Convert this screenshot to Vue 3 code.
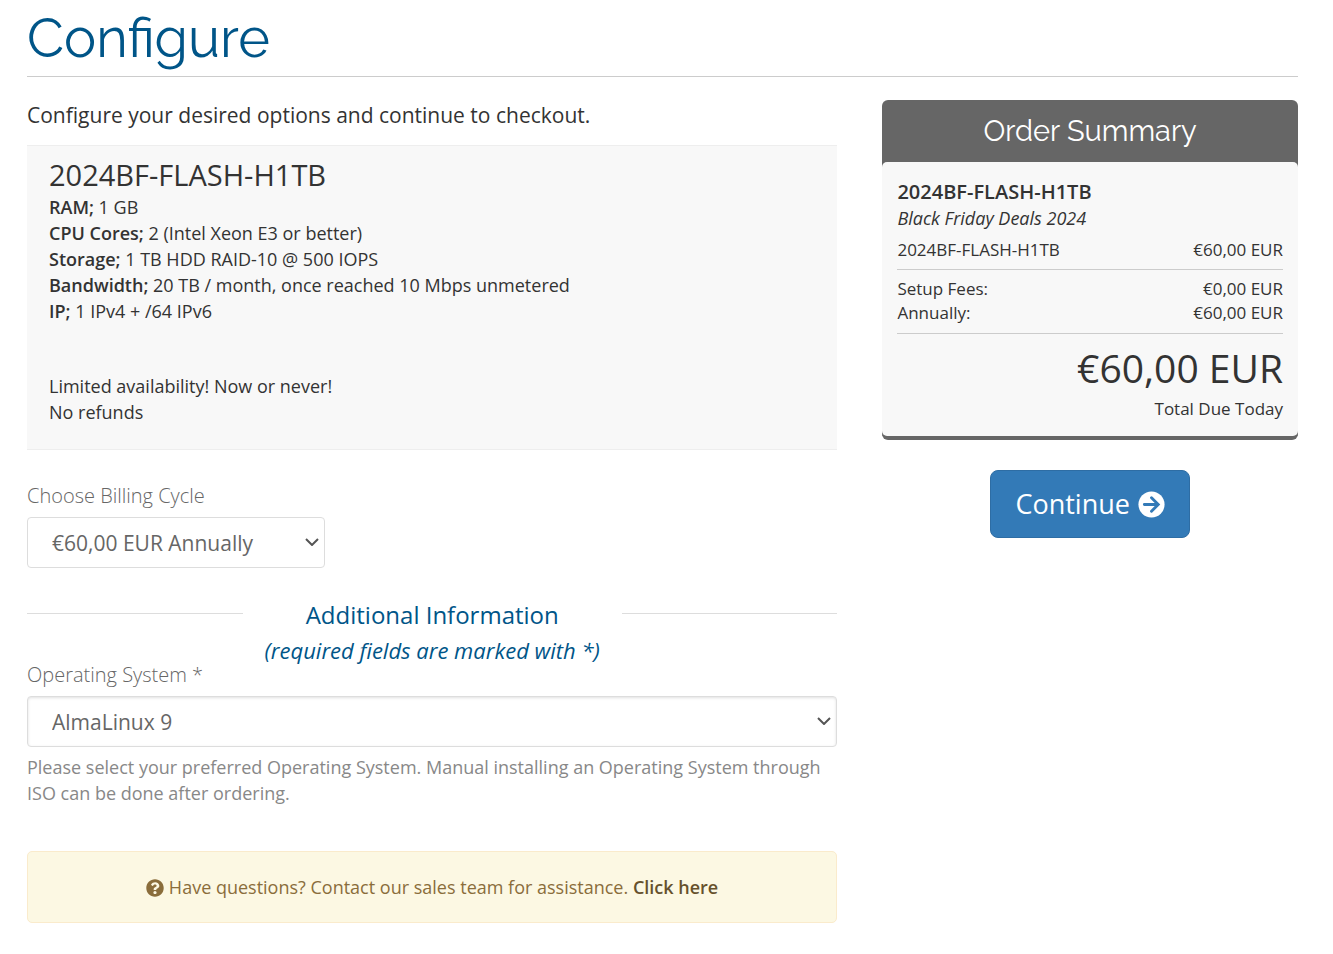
<template>
  <main class="configure">
    <h1 class="page-title">Configure</h1>

    <form class="layout" @submit.prevent>
      <div class="options">
        <p class="intro">Configure your desired options and continue to checkout.</p>

        <section class="product">
          <h2 class="product-title">{{ product.name }}</h2>
          <ul class="specs">
            <li v-for="spec in product.specs" :key="spec.label">
              <strong>{{ spec.label }};</strong> {{ spec.value }}
            </li>
          </ul>
          <p class="notes">Limited availability! Now or never!<br>No refunds</p>
        </section>

        <div class="field">
          <label for="billing-cycle">Choose Billing Cycle</label>
          <div class="select-wrap cycle">
            <select id="billing-cycle" v-model="billingCycle">
              <option value="annually">€60,00 EUR Annually</option>
            </select>
            <svg class="chevron" viewBox="0 0 14 8" aria-hidden="true">
              <path d="M1 1l6 6 6-6" />
            </svg>
          </div>
        </div>

        <div class="sub-heading">
          <h3>Additional Information <i>(required fields are marked with *)</i></h3>
        </div>

        <div class="field">
          <label for="operating-system">Operating System *</label>
          <div class="select-wrap">
            <select id="operating-system" class="inset" v-model="operatingSystem">
              <option value="almalinux-9">AlmaLinux 9</option>
            </select>
            <svg class="chevron" viewBox="0 0 14 8" aria-hidden="true">
              <path d="M1 1l6 6 6-6" />
            </svg>
          </div>
          <p class="help">
            Please select your preferred Operating System. Manual installing an Operating System through ISO can be done after ordering.
          </p>
        </div>

        <div class="alert">
          <svg class="alert-icon" viewBox="0 0 512 512" aria-hidden="true">
            <path d="M504 256c0 137-111 248-248 248S8 393 8 256 119 8 256 8s248 111 248 248zM262.700 90c-54.500 0-89.300 23-116.500 63.800-3.500 5.300-2.400 12.400 2.700 16.300l34.700 26.300c5.200 3.900 12.600 3 16.700-2.100 17.900-22.700 30.100-35.800 57.300-35.800 20.400 0 45.700 13.100 45.700 33 0 15-12.400 22.700-32.500 34C247.100 238.500 216 254.900 216 296v4c0 6.600 5.400 12 12 12h56c6.600 0 12-5.400 12-12v-1.300c0-28.500 83.200-29.600 83.200-106.700 0-58-60.200-102-116.500-102zM256 338c-25.400 0-46 20.600-46 46s20.600 46 46 46 46-20.600 46-46-20.600-46-46-46z" />
          </svg>
          Have questions? Contact our sales team for assistance. <a href="#">Click here</a>
        </div>
      </div>

      <aside class="sidebar">
        <section class="summary">
          <h2 class="summary-title">Order Summary</h2>
          <div class="summary-body">
            <strong class="summary-product">{{ product.name }}</strong>
            <i class="summary-group">Black Friday Deals 2024</i>
            <div class="row">
              <span>{{ product.name }}</span>
              <span>€60,00 EUR</span>
            </div>
            <div class="totals">
              <div class="row" v-for="fee in fees" :key="fee.label">
                <span>{{ fee.label }}:</span>
                <span>{{ fee.amount }}</span>
              </div>
            </div>
            <div class="due">
              <span class="amount">€60,00 EUR</span>
              <span>Total Due Today</span>
            </div>
          </div>
        </section>

        <button type="submit" class="continue">
          Continue
          <svg class="continue-icon" viewBox="0 0 512 512" aria-hidden="true">
            <circle cx="256" cy="256" r="248" />
            <path d="M120 256H376M256 128l128 128-128 128" />
          </svg>
        </button>
      </aside>
    </form>
  </main>
</template>

<script setup>
import { ref } from 'vue'

const billingCycle = ref('annually')
const operatingSystem = ref('almalinux-9')

const product = {
  name: '2024BF-FLASH-H1TB',
  specs: [
    { label: 'RAM', value: '1 GB' },
    { label: 'CPU Cores', value: '2 (Intel Xeon E3 or better)' },
    { label: 'Storage', value: '1 TB HDD RAID-10 @ 500 IOPS' },
    { label: 'Bandwidth', value: '20 TB / month, once reached 10 Mbps unmetered' },
    { label: 'IP', value: '1 IPv4 + /64 IPv6' }
  ]
}

const fees = [
  { label: 'Setup Fees', amount: '€0,00 EUR' },
  { label: 'Annually', amount: '€60,00 EUR' }
]
</script>

<style>
body {
  background: #fff;
}
</style>

<style scoped>
.configure {
  padding: 0 35px 24px 27px;
  color: #333;
  font-family: "Open Sans", sans-serif;
  font-size: 18px;
  line-height: 26px;
}

.configure * {
  box-sizing: border-box;
}

h1,
h2,
h3,
p,
ul {
  margin: 0;
  padding: 0;
  font-weight: 400;
}

strong {
  font-weight: 600;
}

.page-title {
  padding: 8px 0;
  border-bottom: 1px solid #ccc;
  color: #058;
  font-family: Raleway, Lato, sans-serif;
  font-size: 54px;
  line-height: 60px;
}

.layout {
  display: grid;
  grid-template-columns: 39fr 20fr;
  gap: 45px;
  align-items: start;
  padding-top: 23px;
}

.intro {
  padding-bottom: 15px;
  font-size: 21px;
  line-height: 30px;
}

.product {
  padding: 12px 22px 24px;
  border: 1px solid #eee;
  border-width: 1px 0;
  background: #f8f8f8;
}

.product-title {
  padding-bottom: 2px;
  font-size: 29px;
  line-height: 34px;
}

.specs {
  list-style: none;
}

.notes {
  padding-top: 49px;
}

.field label {
  display: block;
  margin-bottom: 8px;
  color: #666;
  font-size: 20px;
  font-weight: 300;
}

.product + .field {
  padding-top: 33px;
}

.select-wrap {
  position: relative;
}

.cycle {
  width: 298px;
}

select {
  display: block;
  width: 100%;
  height: 51px;
  padding: 0 24px;
  border: 1px solid #ddd;
  border-radius: 4px;
  background: #fff;
  color: #666;
  font-family: inherit;
  font-size: 21px;
  appearance: none;
}

.inset {
  box-shadow: inset 0 1px 3px rgba(0, 0, 0, 0.12);
}

.chevron {
  position: absolute;
  top: 21px;
  right: 6px;
  width: 14px;
  height: 8px;
  fill: none;
  stroke: #555;
  stroke-width: 2;
  pointer-events: none;
}

.sub-heading {
  display: flex;
  gap: 22px;
  padding-top: 29px;
  color: #058;
  text-align: center;
}

.sub-heading::before,
.sub-heading::after {
  content: "";
  flex: 1;
  margin-top: 16px;
  border-top: 1px solid #ddd;
}

.sub-heading h3 {
  font-size: 24px;
  line-height: 35px;
}

.sub-heading i {
  display: block;
  margin-top: 6px;
  font-size: 22px;
  line-height: 24px;
}

.help {
  padding-top: 7px;
  color: #888;
}

.alert {
  margin-top: 45px;
  padding: 22px;
  border: 1px solid #faebcc;
  border-radius: 5px;
  background: #fcf8e3;
  color: #8a6d3b;
  text-align: center;
}

.alert-icon {
  width: 18px;
  height: 18px;
  fill: currentColor;
  vertical-align: -3px;
}

.alert a {
  color: #66512c;
  font-weight: 600;
  text-decoration: none;
}

.summary {
  border-bottom: 4px solid #666;
  border-radius: 6px;
  background: #666;
}

.summary-title {
  padding: 14px;
  color: #fff;
  font-family: Raleway, Lato, sans-serif;
  font-size: 29px;
  line-height: 34px;
  text-align: center;
}

.summary-body {
  padding: 16px 15px 15px;
  border-radius: 5px;
  background: #f8f8f8;
  font-size: 17px;
  line-height: 24px;
}

.summary-product,
.summary-group {
  display: block;
}

.summary-product {
  font-size: 20px;
  line-height: 28px;
}

.summary-group {
  padding-bottom: 8px;
  font-size: 18px;
}

.row {
  display: flex;
  justify-content: space-between;
}

.totals {
  margin: 7px 0;
  padding: 7px 0 8px;
  border: 1px solid #ccc;
  border-width: 1px 0;
}

.due {
  display: flex;
  flex-direction: column;
  gap: 2px;
  text-align: right;
}

.amount {
  font-size: 39px;
  line-height: 54px;
}

.continue {
  display: flex;
  align-items: center;
  gap: 8px;
  margin: 30px auto 0;
  padding: 14px 24px;
  border: 1px solid #2e6da4;
  border-radius: 8px;
  background: #337ab7;
  color: #fff;
  font-family: inherit;
  font-size: 27px;
  line-height: 38px;
  cursor: pointer;
}

.continue-icon {
  width: 27px;
  height: 27px;
}

.continue-icon circle {
  fill: #fff;
}

.continue-icon path {
  fill: none;
  stroke: #337ab7;
  stroke-width: 54;
  stroke-linecap: round;
}
</style>
